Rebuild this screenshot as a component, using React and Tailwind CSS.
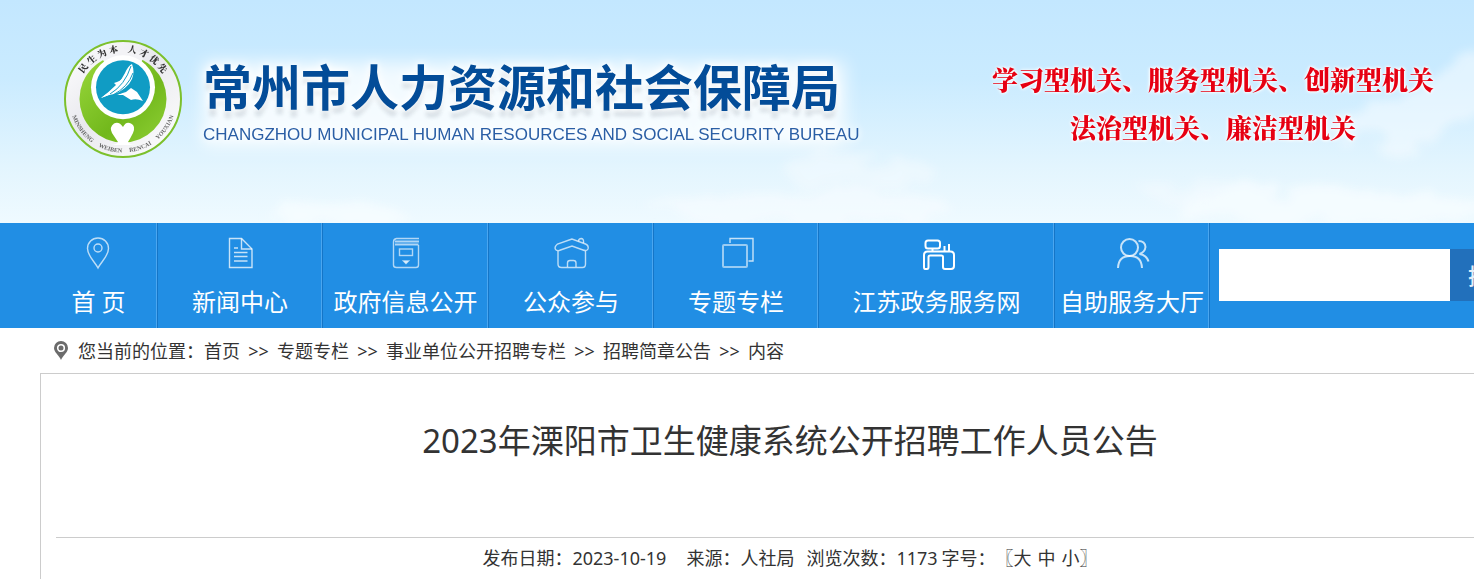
import React from "react";

const navItems = [
  { label: "首 页", icon: "pin", width: "w-[118px]" },
  { label: "新闻中心", icon: "doc", width: "w-[165px]" },
  { label: "政府信息公开", icon: "archive", width: "w-[166px]" },
  { label: "公众参与", icon: "house", width: "w-[165px]" },
  { label: "专题专栏", icon: "layers", width: "w-[165px]" },
  { label: "江苏政务服务网", icon: "desk", width: "w-[236px]" },
  { label: "自助服务大厅", icon: "people", width: "w-[155px]" },
];

const crumbs = ["首页", "专题专栏", "事业单位公开招聘专栏", "招聘简章公告", "内容"];

const iconShapes = {
  pin: (
    <g strokeOpacity="0.7">
      <path d="M17 31 C14 25 6.500 19 6.500 11.500 A10.500 10.500 0 0 1 27.500 11.500 C27.500 19 20 25 17 31 Z" />
      <circle cx="17" cy="11" r="4" />
    </g>
  ),
  doc: (
    <g strokeOpacity="0.75">
      <path d="M7.500 1.500 H19.500 L30 12 V30.500 H7.500 Z" />
      <path d="M19.500 1.500 V12 H30" />
      <path d="M12 11 H16 M12 15.500 H25.500 M12 19.500 H25.500 M12 24 H25.500" />
    </g>
  ),
  archive: (
    <g strokeOpacity="0.65">
      <path d="M31 1.500 H8.500 Q5.500 2 5.500 5 V28 Q5.500 30.500 8.500 30.500 H28 Q30.500 30.500 30.500 28 V8" />
      <path d="M7 4.500 H31 M7 7.500 H30.500" strokeWidth="2" />
      <rect x="11.500" y="12" width="13" height="6.500" />
      <path d="M15.500 24 H20.500 L18 26.500 Z" fill="currentColor" fillOpacity="0.6" />
    </g>
  ),
  house: (
    <g strokeOpacity="0.7">
      <path d="M19 2 L4.500 7 Q1 10 2.500 12.500 Q4.500 14.500 7.500 13 L19 9 L30 13 Q33.500 14.500 35 12 Q36 8.500 32.500 7 Z" />
      <path d="M25.500 4.500 Q25.500 1.500 28.500 1.500 Q31 2 30.500 6" />
      <path d="M5 14 V27 Q5 30.500 8.500 30.500 H29.500 Q32.500 30.500 32.500 27 V14" />
      <path d="M14.500 30 V26 Q14.500 23.500 17 23.500 H20.500 Q23 23.500 23 26 V30" />
    </g>
  ),
  layers: (
    <g>
      <path d="M12 6 V1.500 H35 V24 H30.500" strokeOpacity="0.75" />
      <rect x="5" y="8" width="24" height="22" rx="1" strokeWidth="2" strokeOpacity="0.55" />
    </g>
  ),
  desk: (
    <g strokeWidth="2" transform="translate(2 0)">
      <rect x="4.500" y="3.500" width="14.500" height="8" rx="2.500" />
      <path d="M11.500 12 V14 M23.500 14 V9 M28 14 V7" />
      <path d="M4 32 Q3 32 3 30 V18 Q3 14.500 6.500 14.500 H29.500 Q33 14.500 33 18 V29 Q33 32 30 32 H24 Q22 32 22 30 V20 Q22 18.500 20.500 18.500 H9 Q7.500 18.500 7.500 20 V30 Q7.500 32 6 32 Z" />
    </g>
  ),
  people: (
    <g strokeWidth="2" strokeOpacity="0.75" transform="translate(1 0)">
      <circle cx="14.500" cy="10.500" r="8.500" />
      <path d="M3 31 Q3.500 19 15 19 Q26.500 19 27 31" />
      <path d="M23.500 4 Q30 4 30.500 10 Q30 15 24.500 17 Q31.500 18 33.500 24.500" />
    </g>
  ),
};

const NavIcon = ({ name }) => (
  <svg
    viewBox="0 0 36 33"
    className="h-[33px] w-9 overflow-visible"
    fill="none"
    stroke="currentColor"
    strokeWidth="1.4"
    aria-hidden="true"
  >
    {iconShapes[name]}
  </svg>
);

const Sky = () => (
  <svg
    className="absolute inset-0 h-full w-full"
    viewBox="0 0 1474 223"
    preserveAspectRatio="none"
    aria-hidden="true"
  >
    <defs>
      <linearGradient id="sky" x1="0" y1="0" x2="0" y2="1">
        <stop offset="0%" stopColor="#c3e7ff" />
        <stop offset="35%" stopColor="#caebff" />
        <stop offset="75%" stopColor="#e3f5fe" />
        <stop offset="100%" stopColor="#effaff" />
      </linearGradient>
      <filter id="cloud" x="-20%" y="-40%" width="140%" height="180%">
        <feTurbulence type="fractalNoise" baseFrequency="0.02 0.035" numOctaves="4" seed="8" result="noise" />
        <feDisplacementMap in="SourceGraphic" in2="noise" scale="45" result="rough" />
        <feGaussianBlur in="rough" stdDeviation="5" />
      </filter>
      <filter id="glow" x="-10%" y="-40%" width="120%" height="180%">
        <feGaussianBlur stdDeviation="9" />
      </filter>
    </defs>
    <rect width="1474" height="223" fill="url(#sky)" />
    <g fill="#f6fcff" filter="url(#cloud)">
      <path d="M1500 45 L1450 70 L1400 100 L1340 118 L1325 140 L1400 150 L1500 120 Z" opacity="0.55" />
      <ellipse cx="860" cy="172" rx="75" ry="16" opacity="0.5" />
      <ellipse cx="800" cy="208" rx="150" ry="18" opacity="0.6" />
      <ellipse cx="1330" cy="208" rx="160" ry="18" opacity="0.8" />
      <ellipse cx="1190" cy="190" rx="50" ry="10" opacity="0.5" />
      <ellipse cx="340" cy="218" rx="70" ry="12" opacity="0.8" />
    </g>
    <rect x="203" y="62" width="642" height="84" fill="#fff" opacity="0.75" filter="url(#glow)" />
  </svg>
);

const Emblem = () => (
  <svg viewBox="0 0 120 120" className="size-30 shrink-0" role="img" aria-label="常州人社徽标">
    <defs>
      <linearGradient id="ring" x1="0" y1="0" x2="1" y2="1">
        <stop offset="0%" stopColor="#ffffff" />
        <stop offset="45%" stopColor="#e9e9ee" />
        <stop offset="100%" stopColor="#ffffff" />
      </linearGradient>
      <linearGradient id="leaf" x1="0" y1="0" x2="1" y2="1">
        <stop offset="0%" stopColor="#9ad83c" />
        <stop offset="60%" stopColor="#72b81c" />
        <stop offset="100%" stopColor="#8fd035" />
      </linearGradient>
      <path id="arc-top" d="M13 60 A47 47 0 0 1 107 60" />
      <path id="arc-bottom" d="M6.500 50 A53.500 53.500 0 0 0 6.500 60 A53.500 53.500 0 0 0 113.500 60 A53.500 53.500 0 0 0 113.500 50" />
    </defs>
    <circle cx="60" cy="60" r="58" fill="url(#ring)" stroke="#7cc02c" strokeWidth="2" />
    <circle cx="60" cy="60" r="43.500" fill="url(#leaf)" />
    <path d="M36 15 Q60 6 82 15 L78 24 H42 Z" fill="#f3f3f6" />
    <circle cx="60" cy="48.300" r="32" fill="#ffffff" />
    <circle cx="60" cy="48.300" r="27" fill="#109cc4" />
    {/* bird over an open book */}
    <g fill="#ffffff">
      <path d="M38 59 Q56 47 62 34 Q65 27 69 25 Q72 33 69 40 L66 45 Q57 55 46 56 Z" />
      <path d="M38 59 Q46 53 53 46 L51 44 L54 43 Q60 41 62 35 L56 52 Z" />
      <path d="M63 53 L68 49 L74 53 L80 62 Q73 59 68 61 L60 56 L53 56 Z" />
    </g>
    <g stroke="#109cc4" strokeWidth="1" fill="none">
      <path d="M47 55 Q62 46 68 27" />
      <path d="M50 56 Q65 48 70 34" />
      <path d="M52 56 Q64 53 70 44" />
    </g>
    {/* heart */}
    <path
      d="M60 88 Q56 82 51 84.500 Q46 88 49 94 Q53 100 55 103 Q54 106 47 106 H73 Q66 106 65 103 Q67 100 70 94 Q73 87 68 84.500 Q63 82 60 88 Z"
      fill="#ffffff"
    />
    <text fontSize="9" fontWeight="900" fill="#333" fontFamily="'Noto Serif CJK SC', 'Noto Sans CJK SC', serif" textAnchor="middle">
      <textPath href="#arc-top" startOffset="50%">
        民 生 为 本{"\u00a0\u00a0\u00a0\u00a0"}人 才 优 先
      </textPath>
    </text>
    <text fontSize="6" fontWeight="700" fill="#666" fontFamily="'Liberation Serif', serif" textAnchor="middle">
      <textPath href="#arc-bottom" startOffset="50%">
        MINSHENG{"\u00a0\u00a0\u00a0\u00a0\u00a0"}WEIBEN{"\u00a0\u00a0\u00a0\u00a0\u00a0"}RENCAI{"\u00a0\u00a0\u00a0\u00a0\u00a0"}YOUXIAN
      </textPath>
    </text>
  </svg>
);

const Header = () => (
  <header className="relative">
    <Sky />
    <div className="relative flex h-[223px] items-start justify-between pr-10 pl-[63px]">
      <div className="flex items-start gap-5 pt-[39px]">
        <Emblem />
        <div className="pt-5 whitespace-nowrap text-[#034c98]">
          <h1 className="text-[49px] leading-[56px] font-bold [text-shadow:0_0_6px_#fff,0_0_12px_#fff,0_7px_4px_#cfd8e0]">
            常州市人力资源和社会保障局
          </h1>
          <p className="font-['Liberation_Sans',Arial,sans-serif] text-[17px] leading-10 text-[#2a5ea5] [text-shadow:0_0_6px_#fff,0_0_10px_#fff]">
            CHANGZHOU MUNICIPAL HUMAN RESOURCES AND SOCIAL SECURITY BUREAU
          </p>
        </div>
      </div>
      <div className="pt-[55px] text-center font-['Noto_Serif_CJK_SC','Noto_Sans_CJK_SC',serif] text-[26px] leading-12 font-black whitespace-nowrap text-[#e60012] [text-shadow:0_0_2px_#fff,0_0_3px_#fff,0_0_4px_#fff]">
        <p>学习型机关、服务型机关、创新型机关</p>
        <p>法治型机关、廉洁型机关</p>
      </div>
    </div>
  </header>
);

const NavBar = () => (
  <div className="flex h-[105px] items-stretch bg-[#218ee4] pl-10 text-white">
    <nav className="flex shrink-0">
      {navItems.map((item) => (
        <a
          key={item.label}
          href="#"
          className={`flex flex-col items-center border-r border-[#1575c6] pt-3.5 shadow-[inset_-1px_0_0_#4ba6ef] ${item.width}`}
        >
          <NavIcon name={item.icon} />
          <span className="mt-3.5 text-2xl leading-9 whitespace-nowrap">{item.label}</span>
        </a>
      ))}
    </nav>
    <form className="ml-[9px] flex shrink-0 items-start pt-[26px]" onSubmit={(e) => e.preventDefault()}>
      <input
        type="text"
        aria-label="搜索内容"
        className="h-[52px] w-[231px] bg-white px-3 text-lg text-[#333] outline-none"
      />
      <button type="submit" className="h-[52px] w-20 bg-[#2270bb] text-[22px] font-medium text-[#e3eef8]">
        搜索
      </button>
    </form>
  </div>
);

const Breadcrumb = () => (
  <nav aria-label="您当前的位置" className="flex h-[45px] items-center pl-[54px] text-lg leading-7">
    <svg viewBox="0 0 14 19" className="mr-2.5 h-[19px] w-3.5" aria-hidden="true">
      <path d="M7 19 C5 14 0 11.500 0 7 A7 7 0 0 1 14 7 C14 11.500 9 14 7 19 Z" fill="#6b6b6b" />
      <circle cx="7" cy="7" r="3.300" fill="#6b6b6b" stroke="#fff" strokeWidth="1.600" />
    </svg>
    <span>您当前的位置：</span>
    {crumbs.map((crumb, i) => (
      <React.Fragment key={crumb}>
        {i > 0 && <span className="w-[37px] text-center">&gt;&gt;</span>}
        {i < crumbs.length - 1 ? <a href="#">{crumb}</a> : <span>{crumb}</span>}
      </React.Fragment>
    ))}
  </nav>
);

const Article = () => (
  <main className="-mr-[66px] ml-10 flex-1 border border-b-0 border-[#ccc] px-[15px] pt-[43px]">
    <h2 className="text-center text-[33px] leading-12">2023年溧阳市卫生健康系统公开招聘工作人员公告</h2>
    <div className="mt-[72px] flex justify-center border-t border-[#ccc] text-lg leading-10 whitespace-nowrap">
      <span>发布日期：2023-10-19</span>
      <span className="ml-5">来源：人社局</span>
      <span className="ml-3">浏览次数：1173</span>
      <span className="ml-1">字号：</span>
      <span className="flex">
        〖
        <button type="button">大</button>
        <button type="button" className="mx-1.5">中</button>
        <button type="button">小</button>
        〗
      </span>
    </div>
  </main>
);

export default function App() {
  return (
    <div className="flex min-h-screen flex-col overflow-x-hidden bg-white font-['Noto_Sans','Noto_Sans_CJK_SC',sans-serif] text-[#333]">
      <Header />
      <NavBar />
      <Breadcrumb />
      <Article />
    </div>
  );
}
